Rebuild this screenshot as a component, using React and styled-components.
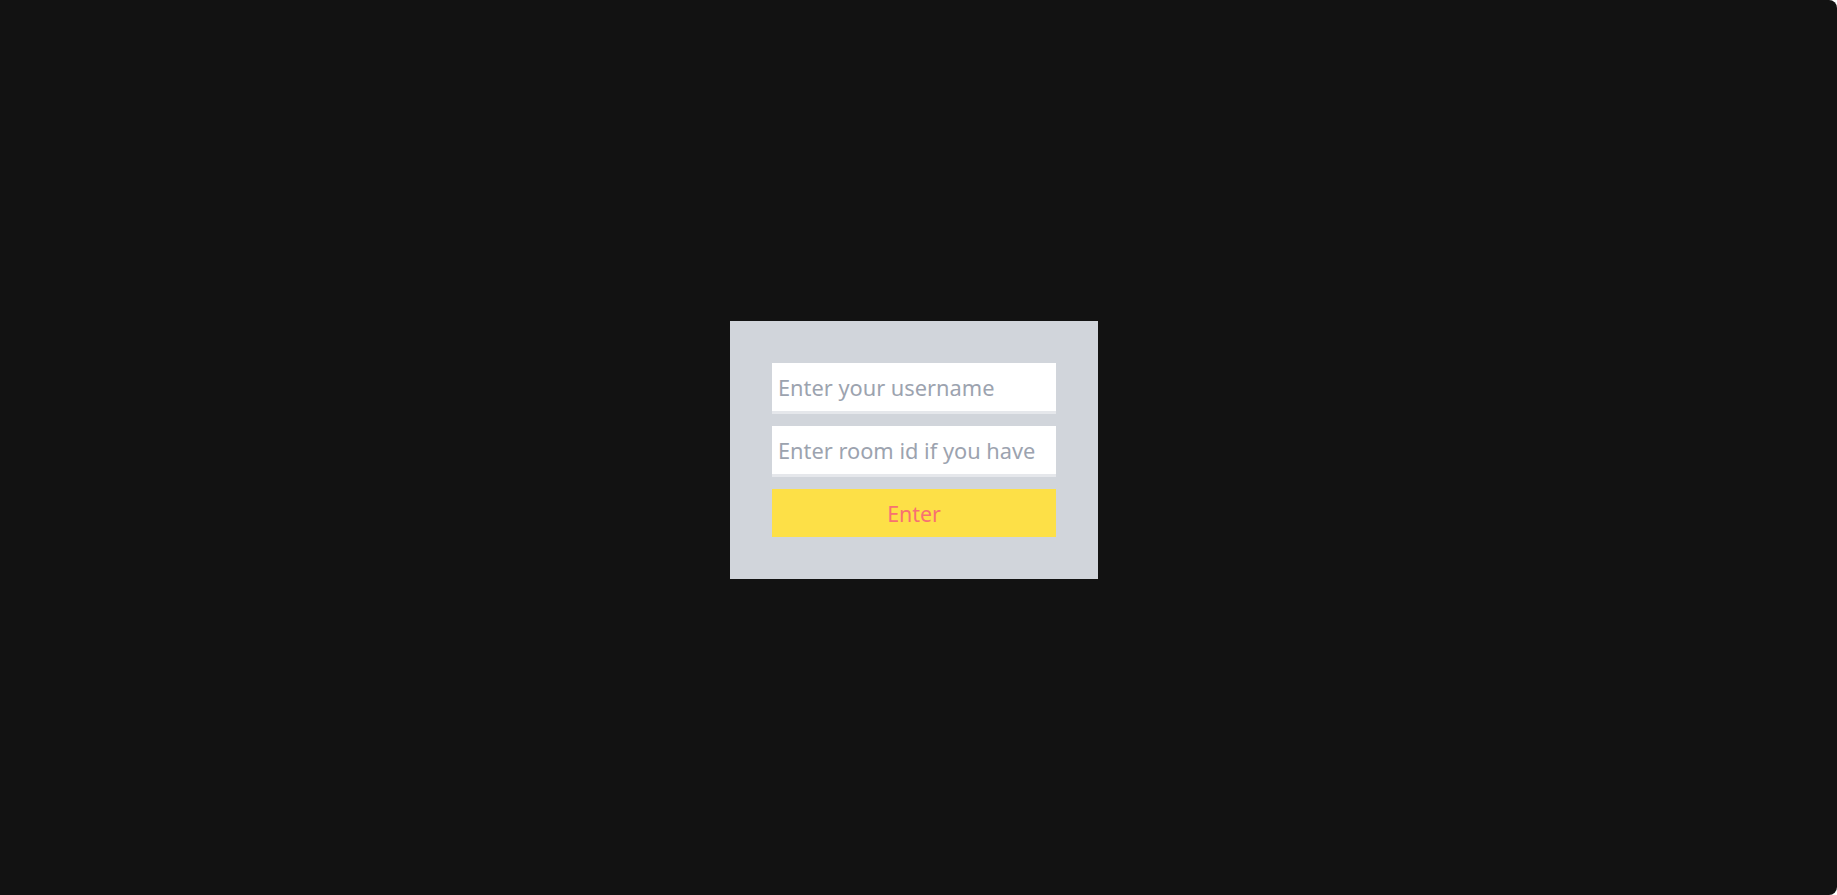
import React from 'react';
import styled, { createGlobalStyle } from 'styled-components';

const GlobalStyle = createGlobalStyle`
  html {
    background: #fff;
  }
  body {
    margin: 0;
    min-height: 100vh;
    background: #121212;
    border-radius: 0 8px 8px 0;
    font-family: "Noto Sans", "Open Sans", sans-serif;
  }
`;

const Page = styled.div`
  height: 895px;
  box-sizing: border-box;
  padding: 5px 9px 0 0;
  display: flex;
  align-items: center;
  justify-content: center;
`;

const Card = styled.form`
  width: 368px;
  box-sizing: border-box;
  padding: 42px;
  background: #d1d5db;
  display: flex;
  flex-direction: column;
  gap: 12px;
`;

const Input = styled.input`
  height: 51px;
  box-sizing: border-box;
  border: none;
  border-bottom: 3px solid #e5e7eb;
  background: #fff;
  padding: 0 6px;
  font-family: inherit;
  font-size: 21.8px;
  color: #374151;
  outline: none;

  &::placeholder {
    color: #9ca3af;
  }
`;

const Button = styled.button`
  height: 48px;
  border: none;
  background: #fde047;
  color: #f87171;
  font-family: inherit;
  font-size: 21.4px;
  cursor: pointer;
`;

const App = () => {
  return (
    <>
      <GlobalStyle />
      <Page>
        <Card onSubmit={e => e.preventDefault()}>
          <Input placeholder="Enter your username" />
          <Input placeholder="Enter room id if you have" />
          <Button type="submit">Enter</Button>
        </Card>
      </Page>
    </>
  );
};

export default App;
